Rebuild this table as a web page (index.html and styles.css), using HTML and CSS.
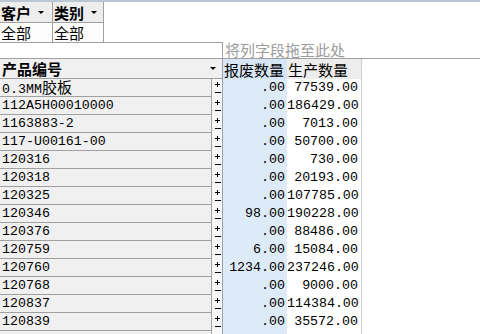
FILE: index.html
```html
<!DOCTYPE html>
<html lang="zh">
<head>
<meta charset="utf-8">
<link rel="stylesheet" href="styles.css">
</head>
<body>
<div class="topbar"></div>
<div class="filters">
  <div class="fcell fhead"><span class="zh b">客户</span><span class="caret"></span></div>
  <div class="fcell fhead"><span class="zh b">类别</span><span class="caret"></span></div>
  <div class="fcell"><span class="zh">全部</span></div>
  <div class="fcell"><span class="zh">全部</span></div>
</div>
<div class="colzone">
  <div class="spacer"></div>
  <div class="drop"><span class="zh">将列字段拖至此处</span></div>
</div>
<div class="pivot">
  <div class="hrow">
    <div class="hh"><span class="zh b">产品编号</span><span class="caret"></span></div>
    <div class="h1"><span class="zh">报废数量</span></div>
    <div class="h2"><span class="zh">生产数量</span></div>
  </div>
  <div class="row"><div class="rh">0.3MM<span class="zh">胶板</span></div><div class="btn"></div><div class="c1">.00</div><div class="c2">77539.00</div></div>
  <div class="row"><div class="rh">112A5H00010000</div><div class="btn"></div><div class="c1">.00</div><div class="c2">186429.00</div></div>
  <div class="row"><div class="rh">1163883-2</div><div class="btn"></div><div class="c1">.00</div><div class="c2">7013.00</div></div>
  <div class="row"><div class="rh">117-U00161-00</div><div class="btn"></div><div class="c1">.00</div><div class="c2">50700.00</div></div>
  <div class="row"><div class="rh">120316</div><div class="btn"></div><div class="c1">.00</div><div class="c2">730.00</div></div>
  <div class="row"><div class="rh">120318</div><div class="btn"></div><div class="c1">.00</div><div class="c2">20193.00</div></div>
  <div class="row"><div class="rh">120325</div><div class="btn"></div><div class="c1">.00</div><div class="c2">107785.00</div></div>
  <div class="row"><div class="rh">120346</div><div class="btn"></div><div class="c1">98.00</div><div class="c2">190228.00</div></div>
  <div class="row"><div class="rh">120376</div><div class="btn"></div><div class="c1">.00</div><div class="c2">88486.00</div></div>
  <div class="row"><div class="rh">120759</div><div class="btn"></div><div class="c1">6.00</div><div class="c2">15084.00</div></div>
  <div class="row"><div class="rh">120760</div><div class="btn"></div><div class="c1">1234.00</div><div class="c2">237246.00</div></div>
  <div class="row"><div class="rh">120768</div><div class="btn"></div><div class="c1">.00</div><div class="c2">9000.00</div></div>
  <div class="row"><div class="rh">120837</div><div class="btn"></div><div class="c1">.00</div><div class="c2">114384.00</div></div>
  <div class="row"><div class="rh">120839</div><div class="btn"></div><div class="c1">.00</div><div class="c2">35572.00</div></div>
  <div class="row"><div class="rh"></div><div class="btn"></div><div class="c1"></div><div class="c2"></div></div>
</div>
</body>
</html>
```
FILE: styles.css
```css
html, body {
  margin: 0;
  padding: 0;
  background: #ffffff;
  overflow: hidden;
}
body {
  width: 480px;
  height: 334px;
  font-family: "Liberation Mono", "Noto Sans CJK SC", monospace;
  font-size: 13.3px;
  color: #000;
}
.zh {
  font-family: "Noto Sans CJK SC", sans-serif;
  font-size: 15px;
  line-height: 1;
}
.b { font-weight: bold; }

.topbar {
  height: 2px;
  background: #bcc7d6;
}

.filters {
  display: grid;
  grid-template-columns: 53px 51px;
  grid-template-rows: 21px 19px;
}
.fcell {
  box-sizing: border-box;
  display: flex;
  align-items: center;
  padding-left: 1px;
  border-right: 1px solid #a0a0a0;
  background: #fdfdfd;
}
.fhead {
  background: #ededed;
  border-bottom: 1px solid #a0a0a0;
}
.fhead .caret { margin-left: 7px; }

.caret {
  display: inline-block;
  width: 0;
  height: 0;
  border-left: 3px solid transparent;
  border-right: 3px solid transparent;
  border-top: 3px solid #000;
}

.colzone {
  display: flex;
  height: 16px;
}
.spacer {
  box-sizing: border-box;
  width: 223px;
  border-top: 1px solid #a0a0a0;
  border-right: 1px solid #a0a0a0;
}
.drop {
  box-sizing: border-box;
  width: 125px;
  padding-left: 2px;
  color: #9c9c9c;
  line-height: 15px;
  white-space: nowrap;
}

.pivot {
  display: flex;
  flex-direction: column;
}
.hrow {
  display: flex;
  height: 21px;
  box-sizing: border-box;
  border-top: 1px solid #a0a0a0;
}
.hh {
  box-sizing: border-box;
  width: 223px;
  background: #f0f0f0;
  border-bottom: 1px solid #a0a0a0;
  border-right: 1px solid #a0a0a0;
  display: flex;
  align-items: center;
  justify-content: space-between;
  padding-left: 2px;
  padding-right: 6px;
}
.h1 {
  box-sizing: border-box;
  width: 64px;
  background: #d7e6f6;
  display: flex;
  align-items: center;
  padding-left: 1px;
}
.h2 {
  box-sizing: border-box;
  width: 75px;
  background: #ededed;
  border-right: 1px solid #d0d0d0;
  display: flex;
  align-items: center;
  padding-left: 1px;
}

.row {
  display: flex;
  height: 18px;
  line-height: 17px;
}
.rh {
  box-sizing: border-box;
  width: 212px;
  background: #f0f0f0;
  border-bottom: 1px solid #a0a0a0;
  border-right: 1px solid #a0a0a0;
  padding-left: 2px;
  white-space: nowrap;
}
.btn {
  box-sizing: border-box;
  width: 11px;
  border-right: 1px solid #a0a0a0;
  background-color: #f7f7f7;
  background-image:
    linear-gradient(#000, #000),
    linear-gradient(#000, #000),
    linear-gradient(#000, #000);
  background-repeat: no-repeat;
  background-size: 5px 1px, 1px 5px, 6px 1px;
  background-position: 3px 5px, 5px 3px, 3px 13px;
}
.c1 {
  box-sizing: border-box;
  width: 64px;
  background: #ddeaf8;
  text-align: right;
  padding-right: 2px;
}
.c2 {
  box-sizing: border-box;
  width: 75px;
  background: #ffffff;
  border-right: 1px solid #d0d0d0;
  text-align: right;
  padding-right: 3px;
}
```
